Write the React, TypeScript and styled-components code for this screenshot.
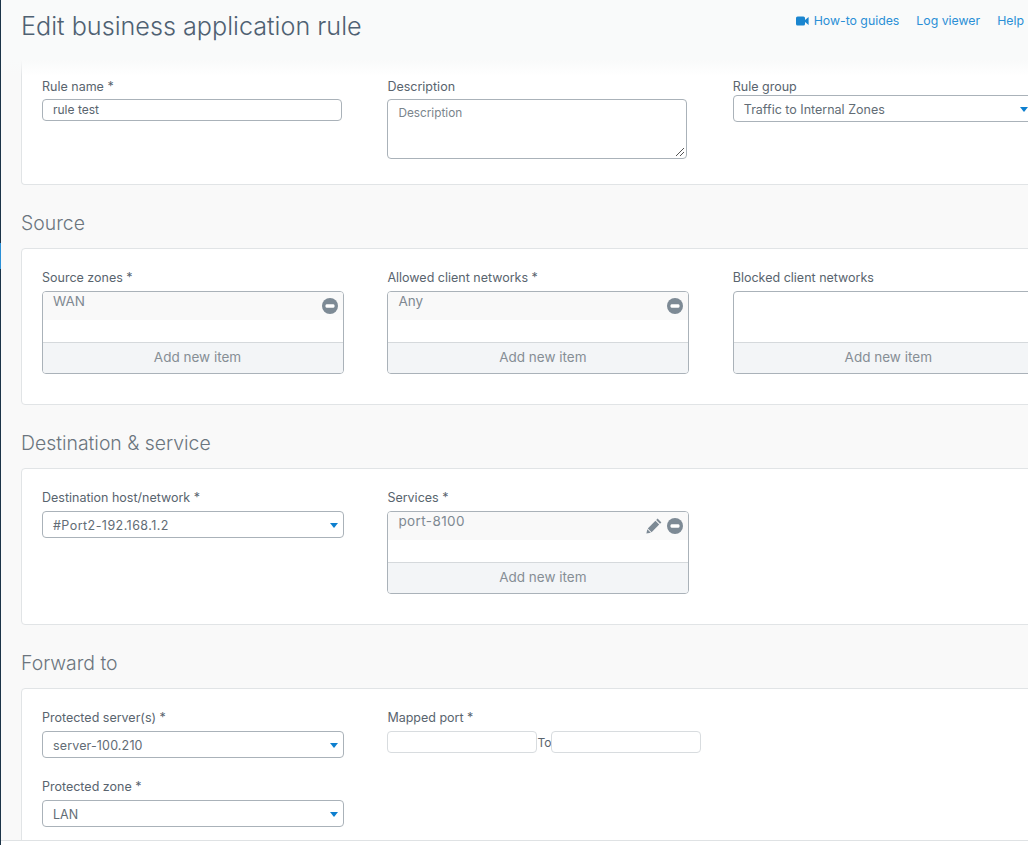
import styled, { createGlobalStyle } from "styled-components";
import { ReactNode } from "react";

const Global = createGlobalStyle`
  html, body {
    margin: 0;
    padding: 0;
    height: 100%;
    overflow: hidden;
    background: #f9f9f9;
  }
  * {
    box-sizing: border-box;
  }
`;

const Shell = styled.div`
  display: flex;
  width: 1028px;
  height: 845px;
  overflow: hidden;
  font-family: Inter, "Noto Sans", "Liberation Sans", sans-serif;
  color: #4c5a66;
`;

const Rail = styled.div`
  flex: none;
  display: flex;
  flex-direction: column;
  width: 1px;
  padding-top: 243px;
  background: #1c3448;
`;

const RailMark = styled.div`
  height: 26px;
  background: #2a8fd6;
`;

const Page = styled.div`
  position: relative;
  flex: 1;
  min-width: 0;
  display: flex;
  flex-direction: column;
`;

const Header = styled.header`
  flex: none;
  height: 60px;
  display: flex;
  align-items: flex-start;
  justify-content: space-between;
  padding: 10px 4px 0 20px;
  background: #f9fafa;
`;

const Title = styled.h1`
  margin: 0;
  font-size: 25.2px;
  font-weight: 300;
  line-height: 32px;
  color: #4f6172;
`;

const HeaderLinks = styled.nav`
  display: flex;
  gap: 17px;
  padding-top: 3px;
`;

const HeaderLink = styled.a`
  display: flex;
  align-items: center;
  gap: 5px;
  font-size: 12.3px;
  line-height: 16px;
  color: #2a8fd6;
`;

const HeaderShade = styled.div`
  position: absolute;
  top: 60px;
  left: 0;
  right: 0;
  height: 16px;
  background: linear-gradient(#f9fafa, rgba(249, 250, 250, 0));
`;

const Content = styled.main`
  flex: 1;
  min-height: 0;
  overflow: hidden;
  padding-left: 20px;
`;

const Card = styled.section<{ $height: number; $open?: boolean }>`
  display: flex;
  gap: 43px;
  width: 1100px;
  height: ${(p) => p.$height}px;
  padding: ${(p) => (p.$open ? "19px" : "21px")} 20px 0;
  background: #fff;
  border: 1px solid #e1e4e6;
  border-top-width: ${(p) => (p.$open ? 0 : 1)}px;
  border-radius: ${(p) => (p.$open ? "0 0 4px 4px" : "4px")};
`;

const SectionTitle = styled.h2`
  margin: 0;
  padding-top: 26px;
  height: 63px;
  font-size: 19.4px;
  font-weight: 300;
  line-height: 24px;
  color: #6b757e;
`;

const Column = styled.div`
  width: 302.4px;
  flex: none;
  display: flex;
  flex-direction: column;
  gap: 21px;
`;

const Field = styled.div`
  display: flex;
  flex-direction: column;
`;

const Label = styled.label<{ $gap?: number }>`
  display: block;
  height: 16px;
  margin-bottom: ${(p) => p.$gap ?? 5}px;
  font-size: 12.5px;
  line-height: 16px;
  color: #59646e;
`;

const TextInput = styled.div<{ $width?: number; $light?: boolean }>`
  flex: none;
  width: ${(p) => p.$width ?? 300}px;
  height: 22px;
  padding-left: 10px;
  font-size: 12px;
  line-height: 20px;
  color: #59646e;
  background: #fff;
  border: 1px solid ${(p) => (p.$light ? "#d8dcdf" : "#aab2b9")};
  border-radius: 4px;
`;

const TextArea = styled.div`
  position: relative;
  width: 300px;
  height: 60px;
  padding: 5px 10px;
  font-size: 11.8px;
  line-height: 16px;
  color: #7a848c;
  border: 1px solid #aab2b9;
  border-radius: 4px;
`;

const Grip = styled.svg`
  position: absolute;
  right: 1px;
  bottom: 1px;
`;

const Select = styled.div<{ $wide?: boolean; $track?: number }>`
  display: flex;
  align-items: center;
  justify-content: space-between;
  width: ${(p) => (p.$wide ? "320px" : "302px")};
  height: 27px;
  padding: 1px ${(p) => (p.$wide ? "24px" : "5px")} 0 10px;
  font-size: 12.5px;
  letter-spacing: ${(p) => p.$track ?? 0}px;
  color: #626c75;
  background: #fff;
  border: 1px solid #aab2b9;
  border-radius: 4px;
`;

const Caret = styled.span`
  width: 0;
  height: 0;
  border-style: solid;
  border-width: 5px 4.5px 0;
  border-color: #0d7fcf transparent transparent;
`;

const ListBox = styled.div`
  width: 302px;
  height: 83px;
  display: flex;
  flex-direction: column;
  border: 1px solid #aab2b9;
  border-radius: 4px;
  overflow: hidden;
`;

const ListBody = styled.div`
  flex: 1;
`;

const ListItem = styled.div<{ $track?: number }>`
  display: flex;
  justify-content: space-between;
  height: 28px;
  padding: 0 5px 0 10px;
  font-size: 13.5px;
  letter-spacing: ${(p) => p.$track ?? 0}px;
  line-height: 18px;
  color: #7f8992;
  background: #f9f9f9;
`;

const ItemIcons = styled.span`
  display: flex;
  align-items: center;
  gap: 5px;
  padding-bottom: 1px;
`;

const AddItem = styled.div`
  flex: none;
  height: 31px;
  padding-left: 9px;
  font-size: 13.5px;
  line-height: 29px;
  text-align: center;
  color: #868e95;
  background: #f3f5f7;
  border-top: 1px solid #d5d9dc;
`;

const PortRow = styled.div`
  display: flex;
  align-items: center;
  font-size: 12px;
  color: #59646e;
`;

const Footer = styled.footer`
  flex: none;
  height: 5px;
  background: #fff;
  border-top: 1px solid #dfe2e4;
`;

const Minus = () => (
  <svg width="16" height="16" viewBox="0 0 16 16">
    <circle cx="8" cy="8" r="8" fill="#7d8a95" />
    <rect x="3.5" y="6.2" width="9" height="3.6" rx="1.4" fill="#fff" />
  </svg>
);

const Pencil = () => (
  <svg width="16" height="16" viewBox="0 0 16 16">
    <path d="M11.6 0.6 15.4 4.4 14 5.8 10.2 2Z" fill="#7d8a95" />
    <path d="M9.4 2.8 13.2 6.6 5.6 14.2 1.8 10.4Z" fill="#7d8a95" />
    <path d="M1.3 11.2 4.8 14.7 0.4 15.6Z" fill="#7d8a95" />
  </svg>
);

const Video = () => (
  <svg width="13" height="10" viewBox="0 0 13 10">
    <rect x="0" y="0.5" width="9" height="9" rx="1.6" fill="#1a85cf" />
    <path d="M9 4 12.6 1V9L9 6Z" fill="#1a85cf" />
  </svg>
);

const Items = ({ item, edit, track }: { item?: string; edit?: boolean; track?: number }) => (
  <ListBox>
    <ListBody>
      {item && (
        <ListItem $track={track}>
          {item}
          <ItemIcons>
            {edit && <Pencil />}
            <Minus />
          </ItemIcons>
        </ListItem>
      )}
    </ListBody>
    <AddItem>Add new item</AddItem>
  </ListBox>
);

const Labeled = ({ label, gap, children }: { label: string; gap?: number; children: ReactNode }) => (
  <Field>
    <Label $gap={gap}>{label}</Label>
    {children}
  </Field>
);

export default function App() {
  return (
    <>
      <Global />
      <Shell>
        <Rail>
          <RailMark />
        </Rail>
        <Page>
          <Header>
            <Title>Edit business application rule</Title>
            <HeaderLinks>
              <HeaderLink>
                <Video />
                How-to guides
              </HeaderLink>
              <HeaderLink>Log viewer</HeaderLink>
              <HeaderLink>Help</HeaderLink>
            </HeaderLinks>
          </Header>
          <Content>
            <Card $height={125} $open>
              <Column>
                <Labeled label="Rule name *" gap={4}>
                  <TextInput>rule test</TextInput>
                </Labeled>
              </Column>
              <Column>
                <Labeled label="Description" gap={4}>
                  <TextArea>
                    Description
                    <Grip width="10" height="10" viewBox="0 0 10 10">
                      <path d="M1 9 9 1M5 9 9 5" stroke="#555" strokeWidth="1" />
                    </Grip>
                  </TextArea>
                </Labeled>
              </Column>
              <Column>
                <Labeled label="Rule group" gap={0}>
                  <Select $wide>Traffic to Internal Zones<Caret /></Select>
                </Labeled>
              </Column>
            </Card>

            <SectionTitle>Source</SectionTitle>
            <Card $height={157}>
              <Column>
                <Labeled label="Source zones *"><Items item="WAN" /></Labeled>
              </Column>
              <Column>
                <Labeled label="Allowed client networks *"><Items item="Any" /></Labeled>
              </Column>
              <Column>
                <Labeled label="Blocked client networks"><Items /></Labeled>
              </Column>
            </Card>

            <SectionTitle>Destination &amp; service</SectionTitle>
            <Card $height={157}>
              <Column>
                <Labeled label="Destination host/network *">
                  <Select $track={0.45}>#Port2-192.168.1.2<Caret /></Select>
                </Labeled>
              </Column>
              <Column>
                <Labeled label="Services *"><Items item="port-8100" edit track={0.4} /></Labeled>
              </Column>
            </Card>

            <SectionTitle>Forward to</SectionTitle>
            <Card $height={200}>
              <Column>
                <Labeled label="Protected server(s) *">
                  <Select $track={0.15}>server-100.210<Caret /></Select>
                </Labeled>
                <Labeled label="Protected zone *">
                  <Select>LAN<Caret /></Select>
                </Labeled>
              </Column>
              <Column>
                <Labeled label="Mapped port *">
                  <PortRow>
                    <TextInput $width={150} $light />
                    To
                    <TextInput $width={150} $light />
                  </PortRow>
                </Labeled>
              </Column>
            </Card>
          </Content>
          <HeaderShade />
          <Footer />
        </Page>
      </Shell>
    </>
  );
}
